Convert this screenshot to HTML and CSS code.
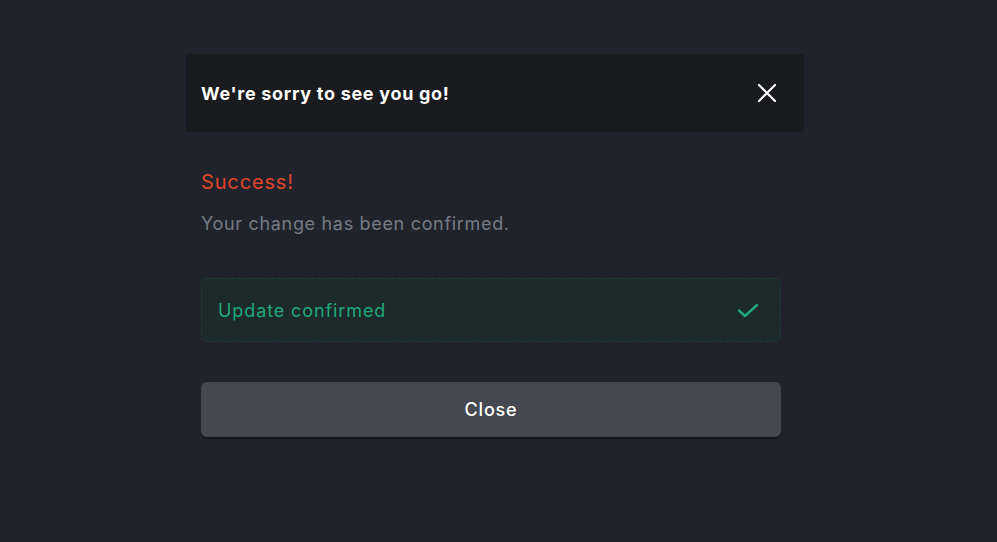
FILE: index.html
```html
<!DOCTYPE html>
<html>
<head>
<meta charset="utf-8">
<link rel="stylesheet" href="styles.css">
</head>
<body>
<div class="modal">
  <div class="modal-header">
    <h2 class="title">We're sorry to see you go!</h2>
    <button class="close-x" aria-label="Close">
      <svg width="20" height="20" viewBox="0 0 20 20"><path d="M2 2L18 18M18 2L2 18" stroke="#ffffff" stroke-width="2.2" stroke-linecap="round"/></svg>
    </button>
  </div>
  <div class="modal-body">
    <div class="status">Success!</div>
    <div class="desc">Your change has been confirmed.</div>
    <div class="confirm-box">
      <span>Update confirmed</span>
      <svg width="24" height="24" viewBox="0 0 24 24"><path d="M3 12.5L9 18L21 7" fill="none" stroke="#1fa97a" stroke-width="2.4" stroke-linecap="round" stroke-linejoin="round"/></svg>
    </div>
    <button class="close-btn">Close</button>
  </div>
</div>
</body>
</html>
```
FILE: styles.css
```css
* { box-sizing: border-box; }
html, body { margin: 0; padding: 0; }
body {
  background: #20232b;
  font-family: "Inter", "Open Sans", sans-serif;
  width: 997px;
  height: 542px;
  padding-top: 54px;
}
.modal {
  width: 618px;
  margin-left: 186px;
}
.modal-header {
  height: 78px;
  background: #1a1b1f;
  display: flex;
  align-items: center;
  justify-content: space-between;
  padding: 0 27px 0 15px;
}
.title {
  margin: 0;
  color: #ffffff;
  font-size: 18px;
  font-weight: 700;
  letter-spacing: 0.7px;
}
.close-x {
  background: none;
  border: 0;
  padding: 0;
  display: flex;
  cursor: pointer;
}
.modal-body {
  padding: 36px 23px 30px 15px;
}
.status {
  color: #e0452b;
  font-size: 20px;
  line-height: 28px;
  letter-spacing: 0.85px;
}
.desc {
  margin-top: 15px;
  color: #767b86;
  font-size: 18px;
  line-height: 26px;
  letter-spacing: 0.68px;
}
.confirm-box {
  margin-top: 41px;
  height: 64px;
  background: #1c2a2a;
  border: 1px dashed #1b4136;
  border-radius: 6px;
  display: flex;
  align-items: center;
  justify-content: space-between;
  padding: 0 20px 0 16px;
  color: #1fa97a;
  font-size: 18px;
  letter-spacing: 0.9px;
}
.close-btn {
  display: block;
  margin-top: 40px;
  width: 580px;
  height: 55px;
  background: #454851;
  border: 0;
  border-radius: 6px;
  box-shadow: 0 2px 0 #15171b;
  color: #ffffff;
  font-family: inherit;
  font-size: 18px;
  font-weight: 500;
  letter-spacing: 0.8px;
}
```
